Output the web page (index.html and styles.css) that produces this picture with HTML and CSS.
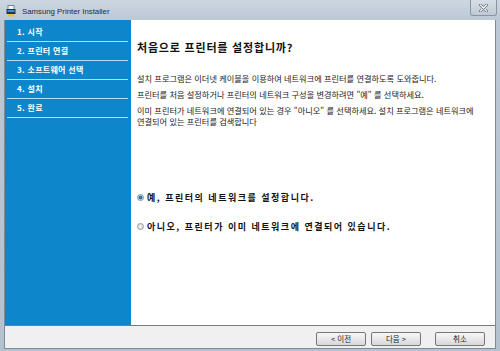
FILE: index.html
```html
<!DOCTYPE html>
<html lang="ko">
<head>
    <meta charset="UTF-8">
    <meta name="viewport" content="width=device-width, initial-scale=1.0">
    <title>Samsung Printer Installer</title>

    <link rel="stylesheet" href="styles.css">

</head>
<body>
    <div class="janela">
        <div class="barraTitulo">
            <svg class="iconeApp" width="10" height="12" viewBox="0 0 10 12">
                <rect x="2" y="0.5" width="6" height="4" fill="#f4f4f4" stroke="#6a7280" stroke-width="0.8"/>
                <rect x="0.5" y="4" width="9" height="5" fill="#26324a"/>
                <rect x="1.5" y="5" width="7" height="2" fill="#3a8ee0"/>
                <rect x="2" y="9" width="6" height="2.5" fill="#e8c23a"/>
            </svg>
            <span class="tituloJanela">Samsung Printer Installer</span>
            <div class="botaoFechar">
                <svg width="9" height="8" viewBox="0 0 9 8">
                    <path d="M1.5 1 L7.5 7 M7.5 1 L1.5 7" stroke="#5d6873" stroke-width="2.6" stroke-linecap="round"/>
                    <path d="M1.5 1 L7.5 7 M7.5 1 L1.5 7" stroke="#ffffff" stroke-width="1.2" stroke-linecap="round"/>
                </svg>
            </div>
        </div>

        <div class="cliente">
            <div class="principal">
                <ul class="etapas">
                    <li>1. 시작</li>
                    <li>2. 프린터 연결</li>
                    <li>3. 소프트웨어 선택</li>
                    <li>4. 설치</li>
                    <li>5. 완료</li>
                </ul>

                <div class="conteudo">
                    <h1>처음으로 프린터를 설정합니까?</h1>
                    <p>설치 프로그램은 이더넷 케이블을 이용하여 네트워크에 프린터를 연결하도록 도와줍니다.</p>
                    <p>프린터를 처음 설정하거나 프린터의 네트워크 구성을 변경하려면 "예" 를 선택하세요.</p>
                    <p class="duasLinhas">이미 프린터가 네트워크에 연결되어 있는 경우 "아니오" 를 선택하세요. 설치 프로그램은 네트워크에<br>연결되어 있는 프린터를 검색합니다</p>

                    <div class="opcoes">
                        <label class="opcao"><span class="radio marcado"></span>예, 프린터의 네트워크를 설정합니다.</label>
                        <label class="opcao"><span class="radio"></span>아니오, 프린터가 이미 네트워크에 연결되어 있습니다.</label>
                    </div>
                </div>
            </div>

            <div class="rodape">
                <button type="button">&lt; 이전</button>
                <button type="button" class="proximo">다음 &gt;</button>
                <button type="button" class="cancelar">취소</button>
            </div>
        </div>
    </div>
</body>
</html>
```

FILE: styles.css
```css
*{
    margin: 0;
    padding: 0;
    box-sizing: border-box;
    font-family: "Noto Sans CJK KR", sans-serif;
}

body{
    width: 500px;
    height: 351px;
    overflow: hidden;
    background-color: #ffffff;
}

.janela{
    width: 500px;
    height: 351px;
    padding: 0 4px 2px 4px;
    background: linear-gradient(#cdd7e2, #bcc8d5 20px, #b4c1cf);
    display: flex;
    flex-direction: column;
}

.barraTitulo{
    height: 20px;
    display: flex;
    align-items: flex-start;
}

.iconeApp{
    margin: 5px 0 0 2px;
}

.tituloJanela{
    font-family: "Liberation Sans", Arial, sans-serif;
    font-size: 7.8px;
    line-height: 10px;
    color: #1c2a38;
    margin: 7px 0 0 6px;
}

.botaoFechar{
    margin-left: auto;
    margin-right: -1px;
    width: 27px;
    height: 16px;
    border: 1px solid #8794a3;
    border-top: none;
    border-radius: 0 0 3px 3px;
    background: linear-gradient(#d6dee7, #bfcad6);
    display: flex;
    align-items: center;
    justify-content: center;
}

.cliente{
    flex: 1;
    display: flex;
    flex-direction: column;
    border: 1px solid #7d8a98;
    border-top: none;
    background-color: #f0f0f0;
}

.principal{
    height: 305px;
    display: flex;
}

.etapas{
    width: 126px;
    background-color: #0e86cc;
    list-style: none;
    padding: 3px 3px 0 2px;
}

.etapas li{
    height: 19px;
    line-height: 18px;
    border-bottom: 1px solid #b6dbf2;
    padding-left: 10px;
    color: #ffffff;
    font-size: 8px;
    font-weight: bold;
    letter-spacing: 0.3px;
}

.conteudo{
    flex: 1;
    background-color: #ffffff;
    padding: 19px 10px 0 6px;
    color: #222222;
}

h1{
    font-size: 11px;
    line-height: 16px;
    letter-spacing: 0.8px;
    color: #111111;
    margin-bottom: 17.5px;
}

p{
    font-size: 8.2px;
    line-height: 10px;
    margin-bottom: 6.5px;
    white-space: nowrap;
}

.duasLinhas{
    line-height: 11.5px;
    margin-top: -1px;
}

.opcoes{
    margin-top: 64px;
}

.opcao{
    display: flex;
    align-items: center;
    height: 12px;
    font-size: 9px;
    font-weight: bold;
    letter-spacing: 1.5px;
    color: #111111;
    margin-bottom: 16.5px;
}

.radio{
    width: 7px;
    height: 7px;
    border-radius: 50%;
    border: 1px solid #9a9a9a;
    background: radial-gradient(circle, #f6f6f6, #d2d2d2);
    margin-right: 3px;
}

.radio.marcado{
    border-color: #7a8ea3;
    background: radial-gradient(circle, #4f95d6 0, #1d5a92 1.6px, #dde4ea 2.2px);
}

.rodape{
    height: 23px;
    border-top: 1px solid #7a7a7a;
    display: flex;
    justify-content: flex-end;
    padding: 6px 10px 0 0;
}

button{
    width: 50px;
    height: 14px;
    border: 1px solid #767676;
    border-radius: 2px;
    background: linear-gradient(#f6f6f6, #e8e8e8 50%, #d8d8d8);
    font-size: 7.5px;
    line-height: 12px;
    color: #222222;
}

.proximo{
    margin-left: 5px;
}

.cancelar{
    margin-left: 14px;
}
```
